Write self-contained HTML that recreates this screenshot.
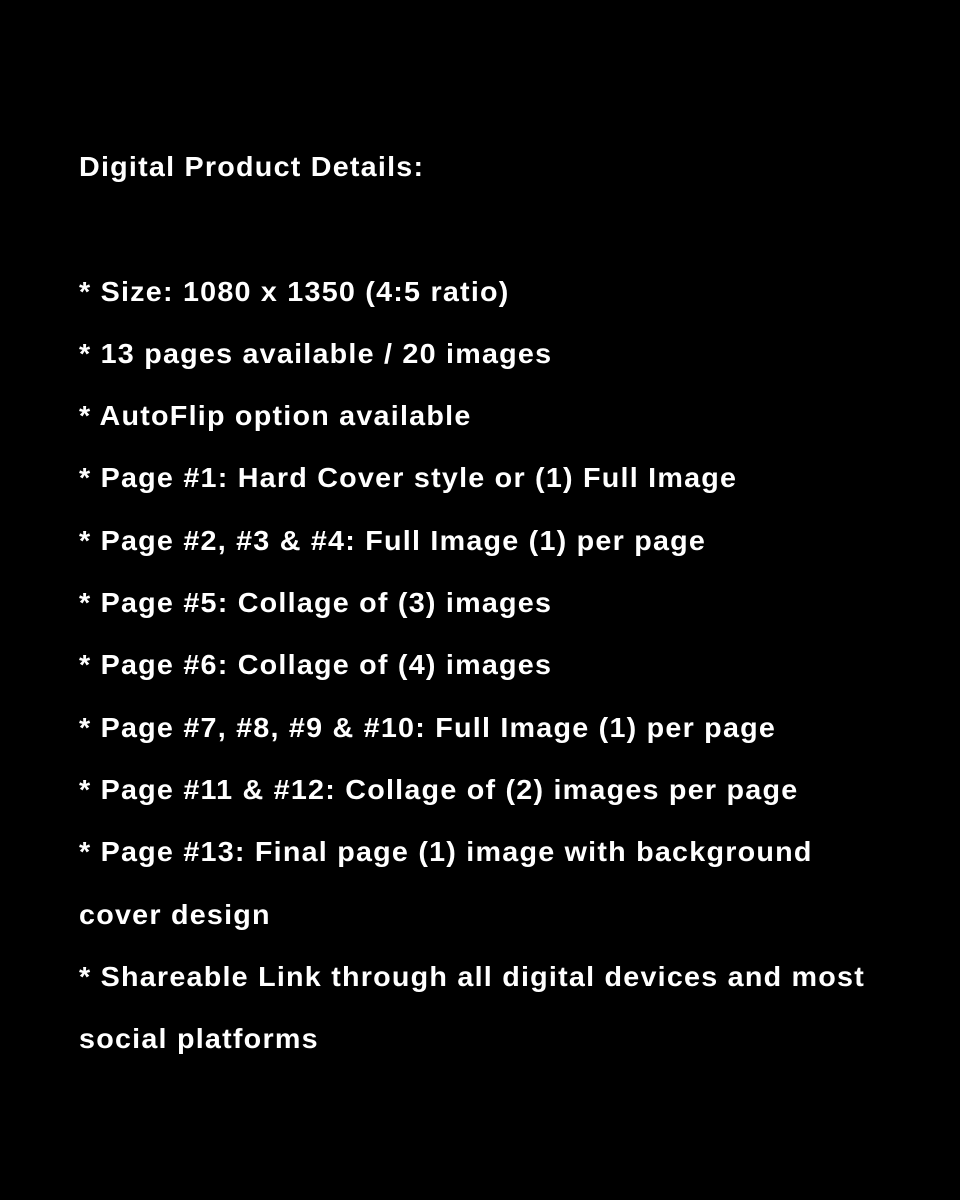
<!DOCTYPE html>
<html><head><meta charset="utf-8"><style>
html,body{margin:0;padding:0;background:#000;}
body{width:960px;height:1200px;position:relative;overflow:hidden;}
.t{position:absolute;left:79px;top:136px;font-family:"Liberation Sans",sans-serif;font-weight:bold;font-size:28px;letter-spacing:1.2px;line-height:62.3px;color:#fff;white-space:pre;transform:scaleX(1.025);transform-origin:0 0;}
</style></head><body>
<div class="t">Digital Product Details:

* Size: 1080 x 1350 (4:5 ratio)
* 13 pages available / 20 images
* AutoFlip option available
* Page #1: Hard Cover style or (1) Full Image
* Page #2, #3 &amp; #4: Full Image (1) per page
* Page #5: Collage of (3) images
* Page #6: Collage of (4) images
* Page #7, #8, #9 &amp; #10: Full Image (1) per page
* Page #11 &amp; #12: Collage of (2) images per page
* Page #13: Final page (1) image with background
cover design
* Shareable Link through all digital devices and most
social platforms</div>
</body></html>
